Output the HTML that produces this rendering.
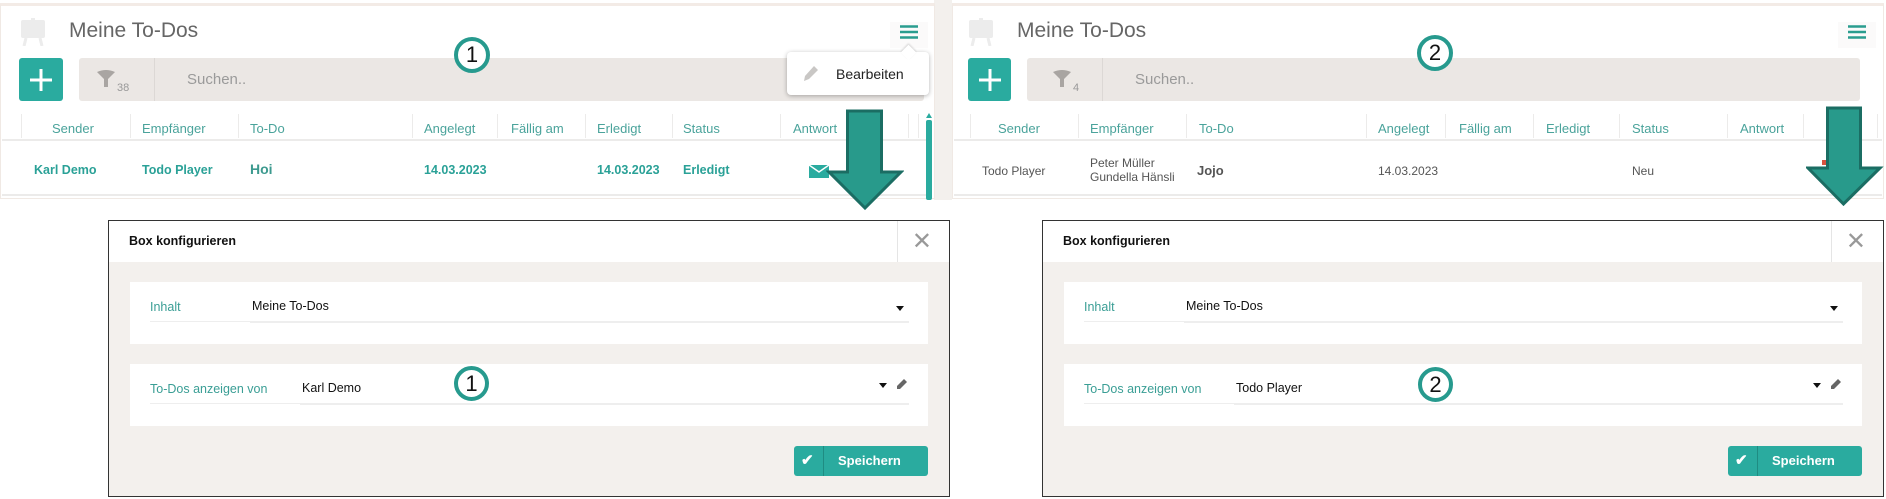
<!DOCTYPE html>
<html><head><meta charset="utf-8"><style>
*{box-sizing:border-box;margin:0;padding:0}
body{width:1886px;height:499px;position:relative;background:#fff;font-family:"Liberation Sans",sans-serif;overflow:hidden}
.a{position:absolute;white-space:nowrap}
.panel{position:absolute;top:3px;height:196px;background:#fff;border:1px solid #f0e9e4;border-top:3px solid #f3ebe6}
.title{font-size:21px;color:#666}
.plus{background:#2aab9f;border-radius:3px}
.plus:before,.plus:after{content:"";position:absolute;background:#fff;left:50%;top:50%;transform:translate(-50%,-50%)}
.plus:before{width:22px;height:3px}.plus:after{width:3px;height:22px}
.search{background:#ebe7e4;border-radius:3px}
.hd{font-size:13px;color:#4aa39b}
.dv{position:absolute;width:1px;height:24px;background:#ecebea;top:114px}
.td{font-size:12.5px;font-weight:bold;color:#2aa197}
.tg{font-size:12px;color:#555}
.circ{position:absolute;width:36px;height:36px;border:4px solid #279a8e;border-radius:50%;background:#fff;font-size:22px;line-height:28px;text-align:center;color:#111}
.modal{position:absolute;top:220px;width:842px;height:277px;border:1.5px solid #333;background:#f3f0ed}
.mh{position:absolute;left:0;top:0;right:0;height:41px;background:#fff}
.mh b{position:absolute;left:20px;top:13px;font-size:12.5px;font-weight:bold;color:#111}
.card{position:absolute;left:21px;right:21px;height:62px;background:#fff}
.lbl{position:absolute;left:20px;top:18px;font-size:12.5px;color:#3a9e95}
.val{position:absolute;top:17px;font-size:12.5px;color:#111}
.ul{position:absolute;top:39px;height:2px;background:#eee}
.car{position:absolute;width:0;height:0;border-left:4px solid transparent;border-right:4px solid transparent;border-top:5px solid #111}
.save{position:absolute;right:21px;bottom:20px;width:134px;height:30px;background:#2aab9f;border-radius:3px;color:#fff;font-weight:bold;font-size:13px}
</style></head><body>
<div style="position:absolute;left:934px;top:0;width:18px;height:200px;background:#f3f0ed"></div>

<!-- LEFT PANEL -->
<div class="panel" style="left:0;width:935px"></div>
<svg class="a" style="left:19px;top:18px" width="28" height="28" viewBox="0 0 28 28"><rect x="2" y="2" width="24" height="18" rx="2" fill="#ececec"/><rect x="12" y="0" width="4" height="4" fill="#ececec"/><path d="M7 20 L5 28 M21 20 L23 28" stroke="#ececec" stroke-width="3"/></svg>
<div class="a title" style="left:69px;top:19px">Meine To-Dos</div>
<div class="a plus" style="left:19px;top:58px;width:44px;height:43px"></div>
<div class="a search" style="left:79px;top:58px;width:845px;height:43px"></div>
<svg class="a" style="left:96px;top:69px" width="20" height="20" viewBox="0 0 20 20"><path d="M1 3 Q10 -1 19 3 L12 10 V18 L8 18 V10 Z" fill="#a9a5a2"/></svg>
<div class="a" style="left:117px;top:82px;font-size:11px;color:#999">38</div>
<div class="a" style="left:154px;top:58px;width:1px;height:43px;background:#dcd8d5"></div>
<div class="a" style="left:187px;top:71px;font-size:15px;color:#9a9a9a">Suchen..</div>
<div class="dv" style="left:21px"></div><div class="dv" style="left:130px"></div><div class="dv" style="left:238px"></div><div class="dv" style="left:412px"></div><div class="dv" style="left:497px"></div><div class="dv" style="left:585px"></div><div class="dv" style="left:672px"></div><div class="dv" style="left:780px"></div><div class="dv" style="left:908px"></div><div class="dv" style="left:918px"></div>
<div class="a hd" style="left:52px;top:121px">Sender</div>
<div class="a hd" style="left:142px;top:121px">Empfänger</div>
<div class="a hd" style="left:250px;top:121px">To-Do</div>
<div class="a hd" style="left:424px;top:121px">Angelegt</div>
<div class="a hd" style="left:511px;top:121px">Fällig am</div>
<div class="a hd" style="left:597px;top:121px">Erledigt</div>
<div class="a hd" style="left:683px;top:121px">Status</div>
<div class="a hd" style="left:793px;top:121px">Antwort</div>
<div class="a" style="left:2px;top:139px;width:930px;height:2px;background:#ecebea"></div>
<div class="a td" style="left:34px;top:163px">Karl Demo</div>
<div class="a td" style="left:142px;top:163px">Todo Player</div>
<div class="a td" style="left:250px;top:161px;font-size:14px;color:#3d9a8f">Hoi</div>
<div class="a td" style="left:424px;top:163px">14.03.2023</div>
<div class="a td" style="left:597px;top:163px">14.03.2023</div>
<div class="a td" style="left:683px;top:163px">Erledigt</div>
<svg class="a" style="left:809px;top:165px" width="20" height="13" viewBox="0 0 20 13"><rect width="20" height="13" fill="#2aab9f"/><path d="M0 0 L10 7 L20 0" stroke="#fff" stroke-width="1.5" fill="none"/></svg>
<div class="a" style="left:2px;top:194px;width:930px;height:2px;background:#ecebea"></div>
<div class="a" style="left:926px;top:120px;width:6px;height:80px;background:#2aab9f;border-radius:2px"></div>
<div class="a" style="left:926px;top:113px;width:0;height:0;border-left:3px solid transparent;border-right:3px solid transparent;border-bottom:5px solid #2aab9f"></div>
<!-- hamburger + popup -->
<div class="a" style="left:890px;top:22px;width:38px;height:26px;background:#fbfafa"></div>
<svg class="a" style="left:900px;top:25px" width="18" height="14"><path d="M0 1.5H18M0 7H18M0 12.5H18" stroke="#2a9d8f" stroke-width="2.5"/></svg>
<div class="a" style="left:787px;top:52px;width:142px;height:43px;background:#fff;border-radius:4px;box-shadow:0 1px 5px rgba(0,0,0,.3)"></div>
<div class="a" style="left:903px;top:47px;width:11px;height:11px;background:#fff;transform:rotate(45deg);box-shadow:-1px -1px 2px rgba(0,0,0,.15)"></div>
<svg class="a" style="left:803px;top:65px" width="16" height="17" viewBox="0 0 16 17"><path d="M11 1 L15 5 L6 14 L1 16 L2 11 Z" fill="#c9c7c5"/></svg>
<div class="a" style="left:836px;top:66px;font-size:14px;color:#222">Bearbeiten</div>
<div class="circ" style="left:454px;top:37px">1</div>
<svg class="a" style="left:826px;top:109px" width="78" height="102" viewBox="0 0 78 102"><path d="M21.5 2 H55.5 V63 H75 L39 99 L3 63 H21.5 Z" fill="#289a8b" stroke="#1b6d63" stroke-width="3"/></svg>

<!-- RIGHT PANEL -->
<div class="panel" style="left:952px;width:932px"></div>
<svg class="a" style="left:967px;top:18px" width="28" height="28" viewBox="0 0 28 28"><rect x="2" y="2" width="24" height="18" rx="2" fill="#ececec"/><rect x="12" y="0" width="4" height="4" fill="#ececec"/><path d="M7 20 L5 28 M21 20 L23 28" stroke="#ececec" stroke-width="3"/></svg>
<div class="a title" style="left:1017px;top:19px">Meine To-Dos</div>
<div class="a plus" style="left:968px;top:58px;width:43px;height:43px"></div>
<div class="a search" style="left:1027px;top:58px;width:833px;height:43px"></div>
<svg class="a" style="left:1052px;top:69px" width="20" height="20" viewBox="0 0 20 20"><path d="M1 3 Q10 -1 19 3 L12 10 V18 L8 18 V10 Z" fill="#a9a5a2"/></svg>
<div class="a" style="left:1073px;top:82px;font-size:11px;color:#999">4</div>
<div class="a" style="left:1102px;top:58px;width:1px;height:43px;background:#dcd8d5"></div>
<div class="a" style="left:1135px;top:71px;font-size:15px;color:#9a9a9a">Suchen..</div>
<div class="dv" style="left:970px"></div><div class="dv" style="left:1078px"></div><div class="dv" style="left:1186px"></div><div class="dv" style="left:1366px"></div><div class="dv" style="left:1445px"></div><div class="dv" style="left:1533px"></div><div class="dv" style="left:1619px"></div><div class="dv" style="left:1727px"></div><div class="dv" style="left:1803px"></div><div class="dv" style="left:1877px"></div>
<div class="a hd" style="left:998px;top:121px">Sender</div>
<div class="a hd" style="left:1090px;top:121px">Empfänger</div>
<div class="a hd" style="left:1199px;top:121px">To-Do</div>
<div class="a hd" style="left:1378px;top:121px">Angelegt</div>
<div class="a hd" style="left:1459px;top:121px">Fällig am</div>
<div class="a hd" style="left:1546px;top:121px">Erledigt</div>
<div class="a hd" style="left:1632px;top:121px">Status</div>
<div class="a hd" style="left:1740px;top:121px">Antwort</div>
<div class="a" style="left:954px;top:139px;width:928px;height:2px;background:#ecebea"></div>
<div class="a tg" style="left:982px;top:164px">Todo Player</div>
<div class="a tg" style="left:1090px;top:156px;line-height:14px">Peter Müller<br>Gundella Hänsli</div>
<div class="a tg" style="left:1197px;top:163px;font-weight:bold;font-size:13px">Jojo</div>
<div class="a tg" style="left:1378px;top:164px">14.03.2023</div>
<div class="a tg" style="left:1632px;top:164px">Neu</div>
<div class="a" style="left:1822px;top:160px;width:4px;height:5px;background:#d9533f"></div>
<div class="a" style="left:954px;top:194px;width:928px;height:2px;background:#ecebea"></div>
<div class="a" style="left:1838px;top:22px;width:38px;height:26px;background:#fbfafa"></div>
<svg class="a" style="left:1848px;top:25px" width="18" height="14"><path d="M0 1.5H18M0 7H18M0 12.5H18" stroke="#2a9d8f" stroke-width="2.5"/></svg>
<div class="circ" style="left:1417px;top:35px">2</div>
<svg class="a" style="left:1806px;top:106px" width="78" height="102" viewBox="0 0 78 102"><path d="M21.5 2 H54.5 V62 H74 L37.5 98 L2 62 H21.5 Z" fill="#289a8b" stroke="#1b6d63" stroke-width="3"/></svg>

<!-- MODAL 1 -->
<div class="modal" style="left:108px">
 <div class="mh"><b>Box konfigurieren</b><div style="position:absolute;right:51px;top:0;width:1px;height:41px;background:#e5e5e5"></div><div style="position:absolute;right:17px;top:6px;font-size:24px;color:#999">✕</div></div>
 <div class="card" style="top:61px"><div class="lbl">Inhalt</div><div class="val" style="left:122px">Meine To-Dos</div><div class="ul" style="left:20px;width:100px;height:1px"></div><div class="ul" style="left:120px;right:19px"></div><div class="car" style="right:24px;top:24px"></div></div>
 <div class="card" style="top:143px"><div class="lbl">To-Dos anzeigen von</div><div class="val" style="left:172px">Karl Demo</div><div class="ul" style="left:20px;width:150px;height:1px"></div><div class="ul" style="left:170px;right:19px"></div><div class="car" style="right:41px;top:19px"></div><svg style="position:absolute;right:20px;top:14px" width="12" height="12" viewBox="0 0 12 12"><path d="M8 1 L11 4 L4 11 L1 11 L1 8 Z" fill="#666"/></svg></div>
 <div class="save"><div style="position:absolute;left:29px;top:0;width:1px;height:30px;background:#1f8c82"></div><span style="position:absolute;left:7px;top:5px;font-size:15px">✔</span><span style="position:absolute;left:44px;top:7px">Speichern</span></div>
</div>
<div class="circ" style="left:454px;top:366px;width:35px;height:35px;line-height:27px">1</div>

<!-- MODAL 2 -->
<div class="modal" style="left:1042px">
 <div class="mh"><b>Box konfigurieren</b><div style="position:absolute;right:51px;top:0;width:1px;height:41px;background:#e5e5e5"></div><div style="position:absolute;right:17px;top:6px;font-size:24px;color:#999">✕</div></div>
 <div class="card" style="top:61px"><div class="lbl">Inhalt</div><div class="val" style="left:122px">Meine To-Dos</div><div class="ul" style="left:20px;width:100px;height:1px"></div><div class="ul" style="left:120px;right:19px"></div><div class="car" style="right:24px;top:24px"></div></div>
 <div class="card" style="top:143px"><div class="lbl">To-Dos anzeigen von</div><div class="val" style="left:172px">Todo Player</div><div class="ul" style="left:20px;width:150px;height:1px"></div><div class="ul" style="left:170px;right:19px"></div><div class="car" style="right:41px;top:19px"></div><svg style="position:absolute;right:20px;top:14px" width="12" height="12" viewBox="0 0 12 12"><path d="M8 1 L11 4 L4 11 L1 11 L1 8 Z" fill="#666"/></svg></div>
 <div class="save"><div style="position:absolute;left:29px;top:0;width:1px;height:30px;background:#1f8c82"></div><span style="position:absolute;left:7px;top:5px;font-size:15px">✔</span><span style="position:absolute;left:44px;top:7px">Speichern</span></div>
</div>
<div class="circ" style="left:1418px;top:367px;width:35px;height:35px;line-height:27px">2</div>
</body></html>
